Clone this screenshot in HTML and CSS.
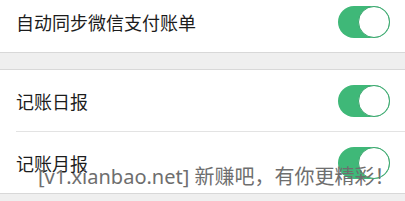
FILE: index.html
```html
<!DOCTYPE html>
<html lang="zh">
<head>
<meta charset="utf-8">
<link rel="stylesheet" href="styles.css">
</head>
<body>
<div class="page">
  <div class="group first">
    <div class="row">
      <span class="label">自动同步微信支付账单</span>
      <span class="switch"><span class="knob"></span></span>
    </div>
  </div>
  <div class="group">
    <div class="row">
      <span class="label">记账日报</span>
      <span class="switch"><span class="knob"></span></span>
    </div>
    <div class="row">
      <span class="label">记账月报</span>
      <span class="switch"><span class="knob"></span></span>
    </div>
  </div>
</div>
<div class="watermark">[v1.xianbao.net] 新赚吧，有你更精彩！</div>
</body>
</html>
```
FILE: styles.css
```css
html, body {
  margin: 0;
  padding: 0;
}
body {
  background: #efefef;
  font-family: "Noto Sans CJK SC", "Noto Sans", sans-serif;
  width: 405px;
  height: 201px;
  overflow: hidden;
  position: relative;
}
.page {
  display: flex;
  flex-direction: column;
  gap: 16px;
  margin-top: -9px;
}
.group {
  background: #fff;
  border-top: 1px solid #d8d8d8;
  border-bottom: 1px solid #d8d8d8;
  padding-left: 16px;
}
.group.first {
  border-top: none;
}
.row {
  height: 61px;
  display: flex;
  align-items: center;
  justify-content: space-between;
  padding-right: 15px;
}
.row + .row {
  border-top: 1px solid #e3e3e3;
}
.label {
  font-size: 18px;
  color: #1c1c1c;
  letter-spacing: 0;
}
.switch {
  width: 52px;
  height: 32px;
  border-radius: 16px;
  background: #3fb878;
  display: flex;
  justify-content: flex-end;
  box-sizing: border-box;
}
.knob {
  width: 32px;
  height: 32px;
  border-radius: 50%;
  background: #fff;
  border: 1px solid #3aa66d;
  box-sizing: border-box;
}
.watermark {
  position: absolute;
  left: 38px;
  top: 165px;
  font-family: "Noto Sans", "Noto Sans CJK SC", sans-serif;
  font-size: 20px;
  line-height: 24px;
  color: #6e6e6e;
  white-space: nowrap;
}
```
